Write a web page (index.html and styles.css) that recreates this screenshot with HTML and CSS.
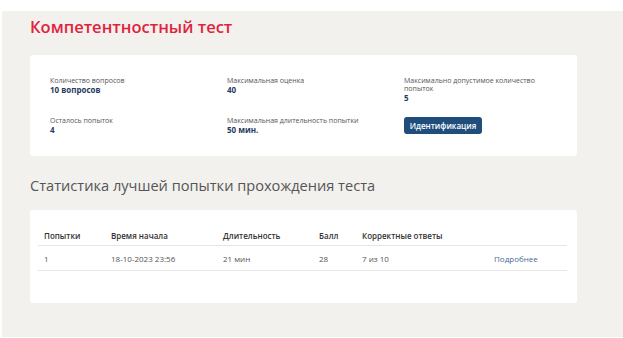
FILE: index.html
```html
<!DOCTYPE html>
<html lang="ru">
<head>
    <meta charset="UTF-8">
    <meta name="viewport" content="width=device-width, initial-scale=1.0">
    <title>Компетентностный тест</title>
    <link rel="stylesheet" href="styles.css">
</head>
<body>
    <div class="page">
        <h1 class="page-title">Компетентностный тест</h1>

        <div class="card info-card">
            <div class="info-grid">
                <div class="info-item">
                    <div class="info-label">Количество вопросов</div>
                    <div class="info-value">10 вопросов</div>
                </div>
                <div class="info-item">
                    <div class="info-label">Максимальная оценка</div>
                    <div class="info-value">40</div>
                </div>
                <div class="info-item">
                    <div class="info-label">Максимально допустимое количество попыток</div>
                    <div class="info-value">5</div>
                </div>
                <div class="info-item">
                    <div class="info-label">Осталось попыток</div>
                    <div class="info-value">4</div>
                </div>
                <div class="info-item">
                    <div class="info-label">Максимальная длительность попытки</div>
                    <div class="info-value">50 мин.</div>
                </div>
                <div class="info-item">
                    <button class="btn-ident">Идентификация</button>
                </div>
            </div>
        </div>

        <h2 class="section-title">Статистика лучшей попытки прохождения теста</h2>

        <div class="card stats-card">
            <table class="stats-table">
                <thead>
                    <tr>
                        <th class="col-try">Попытки</th>
                        <th class="col-start">Время начала</th>
                        <th class="col-dur">Длительность</th>
                        <th class="col-score">Балл</th>
                        <th class="col-correct">Корректные ответы</th>
                        <th class="col-link"></th>
                    </tr>
                </thead>
                <tbody>
                    <tr>
                        <td>1</td>
                        <td>18-10-2023 23:56</td>
                        <td>21 мин</td>
                        <td>28</td>
                        <td>7 из 10</td>
                        <td><a href="#" class="more-link">Подробнее</a></td>
                    </tr>
                </tbody>
            </table>
        </div>
    </div>
</body>
</html>
```

FILE: styles.css
```css
body {
    margin: 0;
    background-color: #fff;
    font-family: "Open Sans", "Liberation Sans", sans-serif;
}

.page {
    margin: 11px 0 0 2px;
    height: 326px;
    box-sizing: border-box;
    padding: 5px 46px 0 28px;
    background-color: #f2f1ee;
}

.page-title {
    margin: 0 0 17px 0;
    font-size: 16.5px;
    line-height: 22px;
    font-weight: 600;
    color: #e0233c;
}

.card {
    background-color: #fff;
    border-radius: 3px;
}

.info-card {
    height: 101px;
    box-sizing: border-box;
    padding: 22px 20px 0 20px;
}

.info-grid {
    display: grid;
    grid-template-columns: 177px 177px 150px;
    row-gap: 15px;
}

.info-item {
    max-width: 136px;
}

.info-label {
    font-size: 7px;
    line-height: 8px;
    color: #555;
}

.info-value {
    font-size: 8px;
    line-height: 9px;
    font-weight: 700;
    color: #253a5e;
}

.btn-ident {
    display: block;
    width: 78px;
    height: 17px;
    padding: 0;
    border: none;
    border-radius: 3px;
    background-color: #1f4e7c;
    color: #fff;
    font-family: "Open Sans", "Liberation Sans", sans-serif;
    font-size: 8px;
    font-weight: 600;
    cursor: pointer;
}

.section-title {
    margin: 19px 0 0 0;
    font-size: 14.6px;
    line-height: 20px;
    font-weight: 400;
    color: #555;
}

.stats-card {
    margin-top: 15px;
    height: 93px;
    box-sizing: border-box;
    padding: 15px 10px 0 8px;
}

.stats-table {
    width: 100%;
    border-collapse: collapse;
    font-size: 8px;
}

.stats-table th {
    height: 20px;
    padding: 0 6px;
    text-align: left;
    font-weight: 600;
    color: #333;
    border-bottom: 1px solid #e6e6e6;
}

.stats-table td {
    height: 24px;
    padding: 0 6px;
    color: #555;
    border-bottom: 1px solid #e6e6e6;
}

.col-try { width: 55px; }
.col-start { width: 100px; }
.col-dur { width: 84px; }
.col-score { width: 31px; }
.col-correct { width: 120px; }

.more-link {
    color: #4a6a98;
    text-decoration: none;
}
```
